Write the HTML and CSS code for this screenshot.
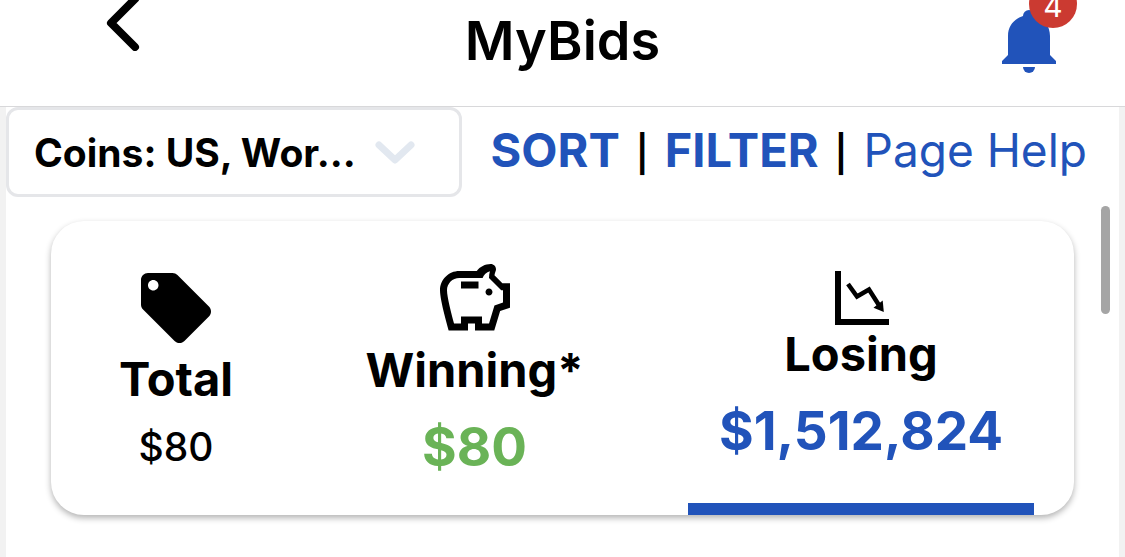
FILE: index.html
```
<!DOCTYPE html>
<html lang="en">

<head>
    <meta charset="UTF-8">
    <meta name="viewport" content="width=device-width, initial-scale=1.0">
    <title>MyBids</title>
    <link rel="stylesheet" href="styles.css">
</head>

<body>
    <header class="header">
        <button class="back" type="button" aria-label="Back">
            <svg width="34" height="56" viewBox="0 0 34 56">
                <path d="M29 4L5 28L29 52" fill="none" stroke="#000" stroke-width="8" stroke-linecap="round" stroke-linejoin="round" />
            </svg>
        </button>
        <h1 class="title">MyBids</h1>
        <button class="bell" type="button" aria-label="Notifications">
            <svg width="54" height="63" viewBox="0 0 54 63">
                <path d="M21 6a6 6 0 0 1 12 0C42 9 48 16 48 26V45l6 6v3H0v-3l6-6V26C6 16 12 9 21 6z" fill="#2153ba" />
                <path d="M21 57h12a6 6 0 0 1-12 0z" fill="#2153ba" />
            </svg>
            <span class="badge">4</span>
        </button>
    </header>

    <main class="page">
        <div class="toolbar">
            <div class="category">
                <select class="category-select" aria-label="Category">
                    <option>Coins: US, Wor...</option>
                </select>
                <svg class="category-arrow" width="40" height="24" viewBox="0 0 40 24">
                    <path d="M4 4L20 19L36 4" fill="none" stroke="#e2e8f0" stroke-width="7" stroke-linecap="round" stroke-linejoin="round" />
                </svg>
            </div>
            <nav class="links">
                <a class="link-bold" href="#">SORT</a>
                <span class="divider">|</span>
                <a class="link-bold" href="#">FILTER</a>
                <span class="divider">|</span>
                <a href="#">Page Help</a>
            </nav>
        </div>

        <div class="card">
            <button class="tab" type="button">
                <svg width="84" height="84" viewBox="0 0 24 24">
                    <path d="M21.41 11.58l-9-9C12.05 2.22 11.55 2 11 2H4c-1.1 0-2 .9-2 2v7c0 .55.22 1.05.59 1.42l9 9c.36.36.86.58 1.41.58.55 0 1.05-.22 1.41-.59l7-7c.37-.36.59-.86.59-1.41 0-.55-.23-1.06-.59-1.42zM5.5 7C4.67 7 4 6.33 4 5.5S4.67 4 5.5 4 7 4.67 7 5.5 6.33 7 5.5 7z" />
                </svg>
                <span class="label">Total</span>
                <span class="value value-small">$80</span>
            </button>
            <button class="tab" type="button">
                <svg width="84" height="84" viewBox="0 0 24 24">
                    <path d="M15 10c0-.55.45-1 1-1s1 .45 1 1-.45 1-1 1-1-.45-1-1zM8 9h5V7H8v2zm14-1.5v6.97l-2.82.94L17.5 21H12v-2h-2v2H4.5S2 12.54 2 9.5 4.46 4 7.5 4h5c.91-1.21 2.36-2 4-2 .83 0 1.5.67 1.5 1.5 0 .21-.04.41-.12.58-.14.34-.26.73-.32 1.15l2.27 2.27H22zm-2 2h-.5L16 6c0-.65.09-1.29.26-1.91-.97.25-1.76.97-2.09 1.91H7.5C5.57 6 4 7.57 4 9.5c0 1.88 1.22 6.65 2.01 9.5H8v-2h6v2h2.01l1.55-5.15 2.44-.82V9.5z" />
                </svg>
                <span class="label">Winning*</span>
                <span class="value value-green">$80</span>
            </button>
            <button class="tab tab-active" type="button">
                <svg width="72" height="64" viewBox="0 0 72 64">
                    <path d="M10 10h6v48h48v6H10z" />
                    <path d="M23 23L32 35.5L44 28.5L54.5 45" fill="none" stroke="#000" stroke-width="4.5" />
                    <path d="M48.5 46.7L57.7 39.5L58.8 51z" />
                </svg>
                <span class="label">Losing</span>
                <span class="value value-blue">$1,512,824</span>
            </button>
        </div>
        <div class="scroll-thumb"></div>
    </main>
</body>

</html>
```
FILE: styles.css
```
* {
    margin: 0;
    padding: 0;
    box-sizing: border-box;
}

body {
    display: flex;
    flex-direction: column;
    min-height: 100vh;
    background-color: #f2f2f2;
    font-family: Inter, "Liberation Sans", sans-serif;
    color: #000;
    overflow: hidden;
}

button {
    border: none;
    background: none;
    font-family: inherit;
    color: inherit;
    cursor: pointer;
}

svg {
    display: block;
}

a {
    color: #2153ba;
    text-decoration: none;
}

.header {
    display: grid;
    grid-template-columns: 1fr auto 1fr;
    align-items: start;
    padding: 0 69px 32px;
    border-bottom: 1px solid #d8d8da;
    background-color: #fff;
}

.header .back {
    justify-self: start;
    margin: -5px 0 0 37px;
}

.header .title {
    padding-top: 8px;
    font-size: 54px;
    font-weight: 600;
    line-height: 66px;
}

.header .bell {
    position: relative;
    justify-self: end;
    margin-top: 10px;
}

.header .badge {
    position: absolute;
    top: -30px;
    left: 27px;
    width: 48px;
    height: 48px;
    border-radius: 50%;
    background-color: #cb3a31;
    color: #fff;
    font-size: 30px;
    line-height: 52px;
    text-align: center;
}

.page {
    position: relative;
    flex: 1;
    margin: 0 6px;
    background-color: #fff;
}

.toolbar {
    display: flex;
    align-items: center;
    justify-content: space-between;
}

.category {
    position: relative;
    flex: none;
    width: 41%;
}

.category-select {
    display: block;
    width: 100%;
    height: 90px;
    padding: 0 90px 0 25px;
    border: 3px solid #e5e6e9;
    border-radius: 12px;
    background-color: #fff;
    color: #000;
    font-family: inherit;
    font-size: 39px;
    font-weight: 700;
    appearance: none;
}

.category-arrow {
    position: absolute;
    top: 34px;
    right: 47px;
    pointer-events: none;
}

.links {
    display: flex;
    align-items: baseline;
    gap: 16px;
    padding-right: 32px;
    font-size: 46px;
    line-height: 58px;
    white-space: nowrap;
}

.links .link-bold {
    font-size: 47px;
    font-weight: 700;
}

.links .divider {
    font-size: 36px;
    font-weight: 600;
}

.card {
    display: grid;
    grid-template-columns: 170fr 427fr 346fr;
    margin: 24px 45px 0;
    padding: 0 40px;
    border-radius: 33px;
    background-color: #fff;
    box-shadow: 0 3px 6px rgba(0, 0, 0, 0.3);
}

.card .tab {
    display: flex;
    flex-direction: column;
    align-items: center;
    justify-content: center;
    min-height: 294px;
}

.card .tab-active {
    border-bottom: 12px solid #2153ba;
}

.card .label {
    font-size: 47px;
    font-weight: 700;
    line-height: 58px;
}

.card .value {
    margin-top: 16px;
    font-size: 53px;
    font-weight: 700;
    line-height: 64px;
}

.card .value-small {
    font-size: 39px;
    font-weight: 500;
    line-height: 46px;
}

.card .value-green {
    color: #6ab357;
}

.card .value-blue {
    color: #2153ba;
}

.scroll-thumb {
    position: absolute;
    top: 99px;
    right: 9px;
    width: 9px;
    height: 108px;
    border-radius: 5px;
    background-color: #a5a5a5;
}
```
